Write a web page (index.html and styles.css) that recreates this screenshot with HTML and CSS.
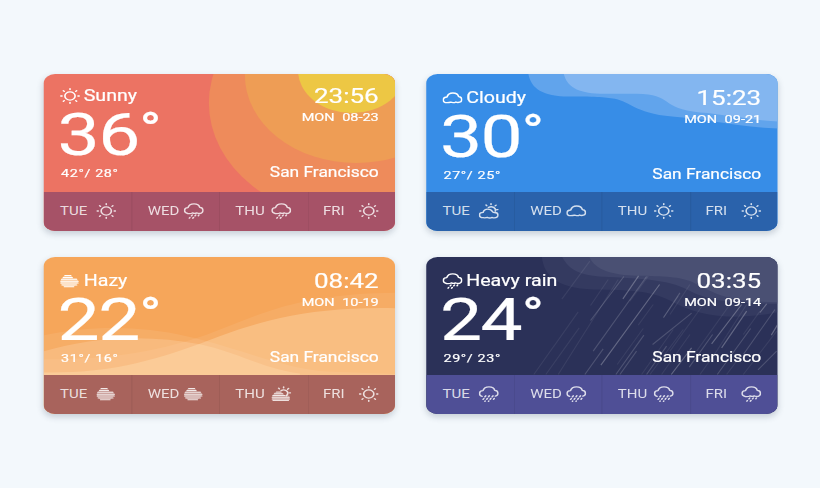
FILE: index.html
```html
<!DOCTYPE html>
<html lang="en">
<head>
<meta charset="utf-8">
<title>Weather</title>
<link rel="stylesheet" href="styles.css">
</head>
<body>
<svg class="defs" width="0" height="0" aria-hidden="true">
  <symbol id="sun" viewBox="0 0 16 16">
    <circle cx="8" cy="8" r="4.1"/>
    <path d="M8 .7v.9M8 14.400v.9M.7 8h.9M14.400 8h.9M2.700 2.700l.7.7M12.600 12.600l.7.7M2.700 13.300l.7-.7M12.600 3.400l.7-.7"/>
  </symbol>
  <symbol id="cloud" viewBox="0 0 16 16">
    <path d="M3.6 12.6C1.8 12.6.6 11.4.6 9.9S1.9 7.1 3.6 7C4.2 4.4 5.9 3 8.3 3c2.4 0 4.2 1.4 4.6 3.7 1.5.2 2.5 1.4 2.5 2.9 0 1.7-1.3 2.9-3 2.9-.7 0-1.2-.1-1.7-.5-.7.6-1.4.7-2.2.7-.8 0-1.5-.2-2-.6-.8.4-1.9.5-2.9.5z"/>
  </symbol>
  <symbol id="rain" viewBox="0 0 16 16">
    <path d="M3.2 10.5C1.6 10.1.6 9 .6 7.5c0-1.6 1.2-2.7 2.8-2.8C4 2 5.7.8 8.2.8c2.4 0 4.2 1.3 4.6 3.5 1.6.2 2.6 1.3 2.6 2.9 0 1.7-1.3 3.2-3.2 3.3-.8 0-1.2-.2-1.6-.6-1.2.7-2.6.7-3.7 0-.8.6-2.2.8-3.7.6z"/>
    <path d="M6.8 12l-.6.9M9.6 12l-.6.9M12.1 12l-.5.8M4.900 14.500l-.4.6M7.800 14.500l-.5.7"/>
  </symbol>
  <symbol id="heavy" viewBox="0 0 16 16">
    <path d="M2.7 10.3C1.3 9.900.6 8.900.6 7.500c0-1.600 1.200-2.700 2.800-2.800C4 2 5.700.8 8.200.8c2.400 0 4.200 1.300 4.600 3.500 1.600.2 2.600 1.300 2.600 2.900 0 1.500-.8 2.600-2.100 3"/>
    <path d="M5.600 9.800l-.7 1.100M8.500 9.700l-.7 1.100M11.400 9.800l-.7 1.100M4.100 12.500l-.6.9M6.900 12.400l-.6.9M9.700 12.400l-.6.9M12.400 12.400l-.6.9M5.200 14.900l-.3.4M8.100 14.900l-.3.4"/>
  </symbol>
  <symbol id="haze" viewBox="0 0 16 16">
    <path class="veil" d="M3.500 2h5.500l1.600 3.400h3l1.200 3.200-1.600 2.800-2.200 2H3.300L.6 11 .4 7.600l1.800-3z"/>
    <path class="fine" d="M4 2.500h4.600M2.600 4.400h7.200M1.200 6.300h12M.7 8.200h13.800M.7 10.100h13.800M1.600 12h11.800M3.400 13.700h7.600"/>
  </symbol>
  <symbol id="partly" viewBox="0 0 16 16">
    <path d="M3.500 14.700C1.800 14.700.6 13.600.6 12s1.300-2.600 2.900-2.600C4 7.300 5.200 6.200 7.200 6.200c1.800 0 3 .9 3.700 2.400.3.700.9 1 1.700.9 1.600 0 2.800 1 2.800 2.600 0 1.700-1.300 2.800-3 2.800-.7 0-1.200-.2-1.600-.5-1.300.8-2.700.8-3.900 0-.9.4-2.200.5-3.400.3z"/>
    <path d="M7.700 4.500c2.900-2 6.400.4 5.600 3.700M9.800.7v.9M13.100 2.900l.8-.8M14.500 6.600h.9M6.400 2.700l-.6-.7"/>
  </symbol>
  <symbol id="hazysun" viewBox="0 0 16 16">
    <path class="veil" d="M3 6h5l3 3.500h3.500v4.500H.8V9.800z"/>
    <path class="fine" d="M4.200 6h3.400M2.600 7.800h6.600M1.300 9.600h9.600M.7 11.300h13.700M.7 13h13.900M1.400 14.600h12.400"/>
    <path d="M7.900 4.600c2.600-1.800 6 .4 5.200 3.400-.2.800-.6 1.300-1.100 1.700M9.900.9v.9M13.100 3.200l.8-.8M14.500 6.800h.9M6.500 2.900l-.6-.7"/>
  </symbol>
</svg>

<main class="board">

  <article class="card sunny">
    <section class="now">
      <svg class="scene" viewBox="0 0 350.500 117.500" preserveAspectRatio="none">
        <ellipse cx="313" cy="29" rx="148" ry="117" fill="#ee8b5b"/>
        <ellipse cx="312" cy="1" rx="111" ry="88" fill="#ee9d55"/>
        <ellipse cx="308" cy="-4" rx="54" ry="43" fill="#edc744"/>
      </svg>
      <div class="reading">
        <div class="condition"><svg class="icon"><use href="#sun"/></svg>Sunny</div>
        <div class="temp">36<span class="deg">°</span></div>
        <div class="range">42°/ 28°</div>
      </div>
      <div class="place">
        <time class="clock">23:56</time>
        <div class="date">MON<span>08-23</span></div>
        <div class="city">San Francisco</div>
      </div>
    </section>
    <ul class="days">
      <li>TUE<svg class="icon"><use href="#sun"/></svg></li>
      <li>WED<svg class="icon"><use href="#rain"/></svg></li>
      <li>THU<svg class="icon"><use href="#rain"/></svg></li>
      <li>FRI<svg class="icon"><use href="#sun"/></svg></li>
    </ul>
  </article>

  <article class="card cloudy">
    <section class="now">
      <svg class="scene" viewBox="0 0 350.500 117.500" preserveAspectRatio="none">
        <g transform="translate(93.500 -4.500) scale(.33333)">
          <path fill="#61a4ec" d="M25 10C32 52 60 80 145 81C220 82 255 82 285 88C335 98 350 137 480 143C570 150 660 173 775 177V10Z"/>
          <path fill="#83b6f0" d="M131 10C140 50 170 70 240 73H350C460 74 420 118 540 129C600 132 690 152 775 156V10Z"/>
        </g>
      </svg>
      <div class="reading">
        <div class="condition"><svg class="icon"><use href="#cloud"/></svg>Cloudy</div>
        <div class="temp">30<span class="deg">°</span></div>
        <div class="range">27°/ 25°</div>
      </div>
      <div class="place">
        <time class="clock">15:23</time>
        <div class="date">MON<span>09-21</span></div>
        <div class="city">San Francisco</div>
      </div>
    </section>
    <ul class="days">
      <li>TUE<svg class="icon"><use href="#partly"/></svg></li>
      <li>WED<svg class="icon"><use href="#cloud"/></svg></li>
      <li>THU<svg class="icon"><use href="#sun"/></svg></li>
      <li>FRI<svg class="icon"><use href="#sun"/></svg></li>
    </ul>
  </article>

  <article class="card hazy">
    <section class="now">
      <svg class="scene" viewBox="0 0 350.500 117.500" preserveAspectRatio="none">
        <g transform="translate(-4 42.500) scale(.33333)" fill="#fff">
          <path opacity=".08" d="M10 108C150 78 300 78 440 110C600 145 720 205 860 216L1070 224V230H10Z"/>
          <path opacity=".07" d="M10 180C180 180 330 165 500 106C650 52 760 -18 1070 -20V230H10Z"/>
          <path fill="#ffe8c4" opacity=".24" d="M10 156C160 110 330 105 480 134C600 160 660 205 780 222V230H10Z"/>
          <path fill="#ffe8c4" opacity=".3" d="M10 219C200 222 320 190 480 133C650 66 800 20 1070 26V230H10Z"/>
        </g>
      </svg>
      <div class="reading">
        <div class="condition"><svg class="icon"><use href="#haze"/></svg>Hazy</div>
        <div class="temp">22<span class="deg">°</span></div>
        <div class="range">31°/ 16°</div>
      </div>
      <div class="place">
        <time class="clock">08:42</time>
        <div class="date">MON<span>10-19</span></div>
        <div class="city">San Francisco</div>
      </div>
    </section>
    <ul class="days">
      <li>TUE<svg class="icon"><use href="#haze"/></svg></li>
      <li>WED<svg class="icon"><use href="#haze"/></svg></li>
      <li>THU<svg class="icon"><use href="#hazysun"/></svg></li>
      <li>FRI<svg class="icon"><use href="#sun"/></svg></li>
    </ul>
  </article>

  <article class="card rainy">
    <section class="now">
      <svg class="scene" viewBox="0 0 350.500 117.500" preserveAspectRatio="none">
        <g transform="translate(103.500 -2.500) scale(.33333)">
          <path fill="#343a60" d="M36 6C42 70 90 100 190 105C300 107 360 108 420 138C510 190 620 198 750 172V6Z"/>
          <path fill="#3f456a" d="M96 6C120 50 150 61 220 67C320 72 400 74 460 100C520 130 560 148 750 148V6Z"/>
          <path fill="#4a5073" d="M178 6C195 48 250 61 320 64C400 66 450 66 490 84C560 120 600 144 750 143V6Z"/>
          <g class="drops">
            <path opacity=".07" d="M180 20L96 134M145 172L12 360M148 220L48 360M235 75L182 153M265 75L85 360M370 150L325 212M445 125L400 190M430 225L335 360M480 240L395 360M340 222L262 330M520 150L420 290M600 150L500 290M650 150L560 290M690 170L640 240M480 90L420 180M620 320L590 360M740 230L640 360M560 290L510 360M355 65L300 140M460 225L360 360"/>
            <path opacity=".16" d="M282 66L182 198M350 66L190 290M220 283L165 360M485 176L368 270M450 115L401 189M342 242L258 360M548 240L478 338M662 222L562 360M735 165L640 300M740 290L684 346M320 290L270 360M410 275L350 360"/>
            <path opacity=".26" d="M326 64L279 133M389 90L213 332M635 150L545 268M710 148L690 174M742 212L724 242M485 280L424 360M650 170L575 280"/>
          </g>
        </g>
      </svg>
      <div class="reading">
        <div class="condition"><svg class="icon"><use href="#rain"/></svg>Heavy rain</div>
        <div class="temp">24<span class="deg">°</span></div>
        <div class="range">29°/ 23°</div>
      </div>
      <div class="place">
        <time class="clock">03:35</time>
        <div class="date">MON<span>09-14</span></div>
        <div class="city">San Francisco</div>
      </div>
    </section>
    <ul class="days">
      <li>TUE<svg class="icon"><use href="#heavy"/></svg></li>
      <li>WED<svg class="icon"><use href="#heavy"/></svg></li>
      <li>THU<svg class="icon"><use href="#heavy"/></svg></li>
      <li>FRI<svg class="icon"><use href="#rain"/></svg></li>
    </ul>
  </article>

</main>
</body>
</html>
```
FILE: styles.css
```css
* { box-sizing: border-box; }

html { background: #f3f8fc; }

body {
  margin: 0;
  height: 488px;
  overflow: hidden;
  background: #f3f8fc;
  font-family: Roboto, "Liberation Sans", sans-serif;
  color: #fff;
}

.defs { display: block; }

/* Widescreen proportions: everything is drawn 1.25 times wider than tall. */
.board {
  width: 656px;
  height: 488px;
  padding: 74px 34.4px 0 35.2px;
  display: grid;
  grid-template-columns: 280.6px 280.6px;
  grid-template-rows: 156.5px 156.5px;
  column-gap: 25.4px;
  row-gap: 26.7px;
  transform: scaleX(1.25);
  transform-origin: 0 0;
}

.card {
  display: flex;
  flex-direction: column;
  border-radius: 9px;
  overflow: hidden;
  background: var(--sky);
  box-shadow: 0 3px 6px rgba(40, 60, 80, .22);
}

.sunny  { --sky: #ec7363; --strip: #a65267; --drop: 0px; }
.cloudy { --sky: #378de7; --strip: #2a62ab; --drop: 2px; }
.hazy   { --sky: #f6a65a; --strip: #a8635c; --drop: 2px; }
.rainy  { --sky: #2b3158; --strip: #4f4f96; --drop: 2px; }

.now {
  position: relative;
  height: 117.5px;
  padding: calc(11.7px + var(--drop)) 12.8px 0;
  display: flex;
  justify-content: space-between;
  overflow: hidden;
}

.scene {
  position: absolute;
  inset: 0;
  width: 100%;
  height: 100%;
}

.drops { stroke: #fff; stroke-width: 3.5; fill: none; }

.reading, .place {
  position: relative;
  white-space: nowrap;
  -webkit-text-stroke: .2px currentColor;
}

.condition {
  display: flex;
  align-items: center;
  gap: 3px;
  font-size: 15.7px;
  line-height: 20px;
}

.temp {
  margin: 4px 0 0 -2px;
  font-size: 60px;
  line-height: 50px;
  letter-spacing: -1.2px;
}

.deg {
  margin-left: .6px;
  font-size: 46px;
  font-weight: 500;
  line-height: 0;
  vertical-align: 9.5px;
}

.range {
  margin: 6px 0 0 .8px;
  font-size: 11.5px;
  line-height: 14px;
  letter-spacing: .5px;
}

.place { text-align: right; }

.clock {
  display: block;
  margin-top: -1.6px;
  font-size: 20.8px;
  line-height: 24px;
}

.date { margin-top: 2px; font-size: 11.6px; line-height: 14px; }

.date span { margin-left: 6px; }

.city { margin-top: 40px; font-size: 13.9px; line-height: 16px; }

.icon {
  flex: none;
  width: 16px;
  height: 16px;
  fill: none;
  stroke: currentColor;
  stroke-width: 1.3;
  stroke-linecap: round;
  stroke-linejoin: round;
}

.veil { fill: currentColor; stroke: none; opacity: .35; }

.fine { stroke-width: 1; }

.days {
  flex: 1;
  margin: 0;
  padding: 0;
  list-style: none;
  display: grid;
  grid-template-columns: repeat(4, 1fr);
  background: var(--strip);
  color: rgba(255, 255, 255, .8);
  font-size: 12px;
}

.days li {
  display: flex;
  align-items: center;
  justify-content: space-between;
  padding: 0 12.4px 0 12.8px;
}

.days li + li { box-shadow: inset 1px 0 rgba(0, 0, 0, .06); }
```
